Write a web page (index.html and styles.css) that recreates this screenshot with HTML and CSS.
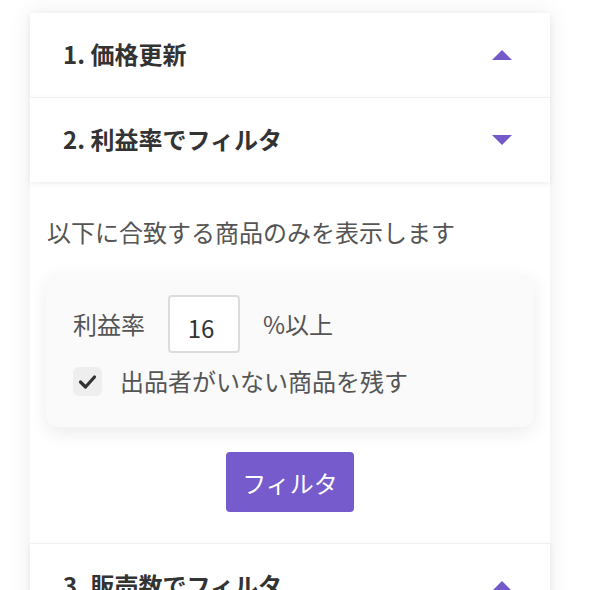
FILE: index.html
```html
<!DOCTYPE html>
<html lang="ja">
<head>
<meta charset="utf-8">
<link rel="stylesheet" href="styles.css">
</head>
<body>
<div class="card">
  <div class="head">
    <span class="head-title">1. 価格更新</span>
    <svg class="tri" width="20" height="10" viewBox="0 0 20 10"><polygon points="10,0 20,10 0,10" fill="#7459c9"/></svg>
  </div>
  <div class="head head-open">
    <span class="head-title">2. 利益率でフィルタ</span>
    <svg class="tri" width="20" height="10" viewBox="0 0 20 10"><polygon points="0,0 20,0 10,10" fill="#7459c9"/></svg>
  </div>
  <div class="panel">
    <p class="desc">以下に合致する商品のみを表示します</p>
    <div class="box">
      <div class="row">
        <span class="label">利益率</span>
        <input class="num" type="text" value="16">
        <span class="label">%以上</span>
      </div>
      <div class="row row-check">
        <span class="check">
          <svg width="29" height="29" viewBox="0 0 29 29"><polyline points="7.5,15 12.5,20 21.5,10" fill="none" stroke="#333" stroke-width="3.2" stroke-linecap="round" stroke-linejoin="round"/></svg>
        </span>
        <span class="label">出品者がいない商品を残す</span>
      </div>
    </div>
    <div class="actions">
      <button class="btn">フィルタ</button>
    </div>
  </div>
  <div class="head">
    <span class="head-title">3. 販売数でフィルタ</span>
    <svg class="tri" width="20" height="10" viewBox="0 0 20 10"><polygon points="10,0 20,10 0,10" fill="#7459c9"/></svg>
  </div>
</div>
</body>
</html>
```
FILE: styles.css
```css
html, body {
  margin: 0;
  padding: 0;
  background: #ffffff;
}
body {
  font-family: "Noto Sans CJK JP", "Noto Sans", sans-serif;
  color: #333;
  overflow: hidden;
}
.card {
  width: 520px;
  margin: 13px 0 0 30px;
  background: #fff;
  box-shadow: 0 0 22px rgba(0, 0, 0, 0.08);
}
.head {
  position: relative;
  z-index: 1;
  height: 84px;
  display: flex;
  align-items: center;
  justify-content: space-between;
  padding: 0 38px 0 33px;
  background: #fff;
  border-top: 1px solid #f0f0f0;
  box-shadow: 0 2px 6px rgba(0, 0, 0, 0.07);
}
.head:first-child {
  border-top: none;
}
.head-title {
  font-size: 24px;
  line-height: 32px;
  font-weight: 700;
  color: #333;
  margin-top: -3px;
}
.tri {
  display: block;
}
.panel {
  padding: 32px 16px 31px 16px;
  background: #fff;
}
.desc {
  margin: 0 0 23px 1px;
  font-size: 24px;
  line-height: 36px;
  color: #555;
}
.box {
  background: #fafafa;
  border-radius: 12px;
  padding: 22px 27px 28px 27px;
  box-shadow: 0 6px 18px rgba(0, 0, 0, 0.08);
}
.row {
  display: flex;
  align-items: center;
  gap: 23px;
}
.row-check {
  margin-top: 10px;
  height: 36px;
  gap: 18px;
}
.label {
  font-size: 24px;
  line-height: 36px;
  color: #555;
}
.num {
  box-sizing: border-box;
  width: 72px;
  height: 58px;
  border: 2px solid #dcdcdc;
  border-radius: 4px;
  background: #fff;
  font-family: "Noto Sans CJK JP", "Noto Sans", sans-serif;
  font-size: 24px;
  color: #333;
  text-align: center;
  padding: 6px 6px 0 0;
  margin: 0;
}
.check {
  display: block;
  width: 29px;
  height: 29px;
  border-radius: 6px;
  background: #eeeeee;
}
.check svg {
  display: block;
}
.actions {
  display: flex;
  justify-content: center;
  margin-top: 25px;
}
.btn {
  width: 128px;
  height: 60px;
  border: none;
  border-radius: 4px;
  background: #755bcb;
  color: #fff;
  font-family: "Noto Sans CJK JP", "Noto Sans", sans-serif;
  font-size: 24px;
  padding: 0;
}
```
